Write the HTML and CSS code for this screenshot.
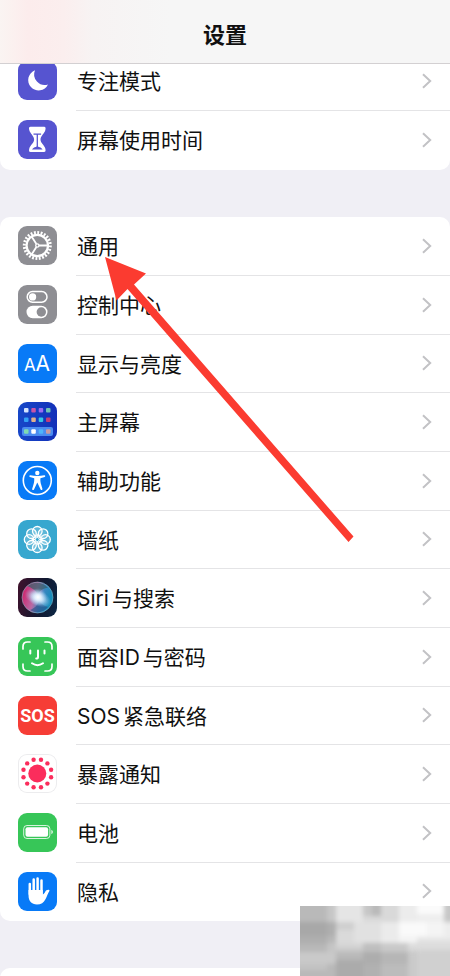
FILE: index.html
```html
<!DOCTYPE html>
<html lang="zh-CN">
<head>
<meta charset="utf-8">
<meta name="viewport" content="width=device-width, initial-scale=1">
<title>设置</title>
<link rel="stylesheet" href="styles.css">
</head>
<body>
<svg class="defs" aria-hidden="true">
  <symbol id="chevron" viewBox="0 0 10 16"><path d="M1 1.2 8.2 8 1 14.8" fill="none" stroke="#c2c2c5" stroke-width="2"/></symbol>
</svg>
<div class="screen">
  <header class="bar"><h1 class="title">设置</h1></header>
  <main class="groups">
    <ul class="group">
      <li class="row"><a class="link" href="#focus">
        <svg class="icon indigo" viewBox="0 0 39 39"><path fill="#fff" d="M17 9.3A10.4 10.4 0 1 0 30 23.5 10.6 10.6 0 0 1 17 9.3Z"/></svg>
        <span class="label">专注模式</span><svg class="chevron"><use href="#chevron"/></svg></a></li>
      <li class="row"><a class="link" href="#screen-time">
        <svg class="icon indigo" viewBox="0 0 39 39"><path fill="#fff" d="M12.5 6.8h13.6c1.6 0 1.800 1.500 1.200 3.400-.9 3.200-4.800 5.800-4.800 9.300s3.900 5.700 4.800 8.900c.6 2.200.3 3.600-1.300 3.600H12.600c-1.600 0-1.900-1.400-1.300-3.600.9-3.200 4.800-5.400 4.800-8.900s-3.900-6.100-4.800-9.300c-.6-1.900-.4-3.400 1.200-3.400Z"/><path d="M15.500 14.200h7.600M19.300 14.200v13" stroke="#5654d0" stroke-width="1.300" fill="none"/><path fill="#5654d0" d="M14 29.500c.8-1.600 3-2.300 5.300-3.200 2.300.9 4.500 1.600 5.300 3.200Z"/></svg>
        <span class="label">屏幕使用时间</span><svg class="chevron"><use href="#chevron"/></svg></a></li>
    </ul>
    <ul class="group">
      <li class="row"><a class="link" href="#general">
        <svg class="icon gray" viewBox="0 0 39 39"><g fill="none" stroke="#fff"><circle cx="19.3" cy="19.5" r="13" stroke-width="3" pathLength="48" stroke-dasharray="1.1 .9"/><circle cx="19.3" cy="19.5" r="10.7" stroke-width="2.2"/><circle cx="19.3" cy="19.5" r="1.600" stroke-width="1.3"/><path stroke-width="1.800" d="M21 19.500h9M18.400 18 13.600 10.500M18.400 21l-4.800 7.500"/></g></svg>
        <span class="label">通用</span><svg class="chevron"><use href="#chevron"/></svg></a></li>
      <li class="row"><a class="link" href="#control-center">
        <svg class="icon gray" viewBox="0 0 39 39"><rect x="9.2" y="6.6" width="19.8" height="10.6" rx="5.3" fill="none" stroke="#fff" stroke-width="1.5"/><circle cx="14.6" cy="11.900" r="3.6" fill="#fff"/><rect x="8.5" y="20.800" width="21" height="12.4" rx="6.2" fill="#fff"/><circle cx="23.3" cy="27" r="4.7" fill="#8e8e93"/></svg>
        <span class="label">控制中心</span><svg class="chevron"><use href="#chevron"/></svg></a></li>
      <li class="row"><a class="link" href="#display">
        <svg class="icon blue" viewBox="0 0 39 39"><text class="glyph" x="6" y="27" font-size="17">A</text><text class="glyph" x="17.500" y="27" font-size="21">A</text></svg>
        <span class="label">显示与亮度</span><svg class="chevron"><use href="#chevron"/></svg></a></li>
      <li class="row"><a class="link" href="#home-screen">
        <svg class="icon navy" viewBox="0 0 39 39"><rect x="4" y="25" width="31" height="9" rx="2" fill="#4a8cf0"/><g><rect x="6" y="6" width="4.5" height="4.5" rx="1" fill="#d5e4ff"/><rect x="13.3" y="6" width="4.5" height="4.5" rx="1" fill="#c855a8"/><rect x="20.7" y="6" width="4.5" height="4.5" rx="1" fill="#9a6bf0"/><rect x="28" y="6" width="4.5" height="4.5" rx="1" fill="#6fc3b5"/><rect x="6" y="15.5" width="4.5" height="4.5" rx="1" fill="#32a0f5"/><rect x="13.3" y="15.5" width="4.5" height="4.5" rx="1" fill="#e0b08c"/><rect x="20.7" y="15.5" width="4.5" height="4.5" rx="1" fill="#35c5e5"/><rect x="28" y="15.5" width="4.5" height="4.5" rx="1" fill="#c23d78"/><rect x="6" y="27.2" width="4.5" height="4.5" rx="1" fill="#7fdcb0"/><rect x="13.3" y="27.2" width="4.5" height="4.5" rx="1" fill="#fff"/><rect x="20.7" y="27.2" width="4.5" height="4.5" rx="1" fill="#4fb4fa"/><rect x="28" y="27.2" width="4.5" height="4.5" rx="1" fill="#c99aa0"/></g></svg>
        <span class="label">主屏幕</span><svg class="chevron"><use href="#chevron"/></svg></a></li>
      <li class="row"><a class="link" href="#accessibility">
        <svg class="icon blue" viewBox="0 0 39 39"><circle cx="19.3" cy="19.5" r="14" fill="none" stroke="#fff" stroke-width="1.6"/><circle cx="19.3" cy="12" r="2.2" fill="#fff"/><path fill="#fff" d="M12.3 14.300c2.300.5 4.600.8 7 .8s4.700-.3 7-.8c1-.2 1.400 1.400.4 1.700l-4.300 1.300c-.2 2.500.1 4.300.8 6.500l1.200 4c.4 1.200-1.300 1.800-1.800.6l-3.300-6.800-3.300 6.800c-.5 1.200-2.200.6-1.800-.6l1.200-4c.7-2.200 1-4 .8-6.500L11.900 16c-1-.3-.6-1.900.4-1.700Z"/></svg>
        <span class="label">辅助功能</span><svg class="chevron"><use href="#chevron"/></svg></a></li>
      <li class="row"><a class="link" href="#wallpaper">
        <svg class="icon cyan" viewBox="0 0 39 39"><g fill="#ffffff30" stroke="#fff" stroke-width="1.3"><circle cx="19.3" cy="11.3" r="4.8"/><circle cx="25.1" cy="13.7" r="4.8"/><circle cx="27.5" cy="19.5" r="4.8"/><circle cx="25.1" cy="25.3" r="4.8"/><circle cx="19.3" cy="27.7" r="4.8"/><circle cx="13.5" cy="25.3" r="4.8"/><circle cx="11.1" cy="19.5" r="4.8"/><circle cx="13.5" cy="13.7" r="4.8"/></g><g stroke="#fff" stroke-width="1"><path d="M19.3 14v11M13.800 19.500h11M15.400 15.600l7.800 7.800M23.200 15.600l-7.800 7.800"/></g><circle cx="19.3" cy="19.5" r="2" fill="#37a7cf" stroke="#fff"/></svg>
        <span class="label">墙纸</span><svg class="chevron"><use href="#chevron"/></svg></a></li>
      <li class="row"><a class="link" href="#siri">
        <svg class="icon siri" viewBox="0 0 39 39"><defs><radialGradient id="core"><stop offset="0" stop-color="#fff"/><stop offset=".3" stop-color="#e6f4ff" stop-opacity=".85"/><stop offset="1" stop-color="#9bc8f0" stop-opacity="0"/></radialGradient><linearGradient id="orb" x1="0" y1=".3" x2="1" y2=".6"><stop offset="0" stop-color="#d01f68"/><stop offset=".42" stop-color="#b86aa4"/><stop offset=".65" stop-color="#3a86c0"/><stop offset="1" stop-color="#0b8eb8"/></linearGradient></defs><circle cx="19.5" cy="19.5" r="15.5" fill="url(#orb)"/><path d="M9 8c7-5 16-4 21 2-5 0-8 2-10 7-2-5-6-7-11-9Z" fill="#345f68" opacity=".7"/><path d="M12 32c5-2 8-5 9-10 2 4 5 6 9 7-5 6-12 7-18 3Z" fill="#254c83" opacity=".6"/><circle cx="19.5" cy="19.5" r="15.5" fill="none" stroke="#86b2c5" stroke-opacity=".6"/><ellipse cx="20" cy="20" rx="14" ry="8" transform="rotate(25 20 20)" fill="url(#core)"/><circle cx="20" cy="19" r="9" fill="url(#core)"/></svg>
        <span class="label"><span class="latin">Siri</span>与搜索</span><svg class="chevron"><use href="#chevron"/></svg></a></li>
      <li class="row"><a class="link" href="#face-id">
        <svg class="icon green" viewBox="0 0 39 39"><g fill="none" stroke="#fff" stroke-width="1.7" stroke-linecap="round"><path d="M5 12V9.500Q5 5 9.500 5H12M27 5h2.500Q34 5 34 9.500V12M34 27v2.500Q34 34 29.500 34H27M12 34H9.500Q5 34 5 29.500V27"/><path d="M12.300 13.500v3M26.500 13.500v3M20 13.500v6.500q0 1.600-1.800 1.600M14 26.300q5.500 3.800 11 0" stroke-width="2"/></g></svg>
        <span class="label">面容<span class="latin">ID</span>与密码</span><svg class="chevron"><use href="#chevron"/></svg></a></li>
      <li class="row"><a class="link" href="#sos">
        <svg class="icon red" viewBox="0 0 39 39"><text class="sos" x="19.5" y="26" text-anchor="middle">SOS</text></svg>
        <span class="label"><span class="latin">SOS</span>紧急联络</span><svg class="chevron"><use href="#chevron"/></svg></a></li>
      <li class="row"><a class="link" href="#exposure">
        <svg class="icon white" viewBox="0 0 39 39"><g fill="#fb2d5c"><circle cx="19.3" cy="19.5" r="9"/><circle cx="33.1" cy="23.2" r="2.2"/><circle cx="29.4" cy="29.6" r="2.2"/><circle cx="23" cy="33.3" r="2.2"/><circle cx="15.6" cy="33.3" r="2.2"/><circle cx="9.2" cy="29.6" r="2.2"/><circle cx="5.5" cy="23.2" r="2.2"/><circle cx="5.5" cy="15.8" r="2.2"/><circle cx="9.2" cy="9.4" r="2.2"/><circle cx="15.6" cy="5.7" r="2.2"/><circle cx="23" cy="5.7" r="2.2"/><circle cx="29.4" cy="9.4" r="2.2"/><circle cx="33.1" cy="15.8" r="2.2"/></g></svg>
        <span class="label">暴露通知</span><svg class="chevron"><use href="#chevron"/></svg></a></li>
      <li class="row"><a class="link" href="#battery">
        <svg class="icon green" viewBox="0 0 39 39"><rect x="5.7" y="12.5" width="26.2" height="13" rx="3.3" fill="none" stroke="#fff" stroke-opacity=".8"/><rect x="7.5" y="14.3" width="22.6" height="9.4" rx="2" fill="#fff"/><path fill="#fff" fill-opacity=".8" d="M33.300 16.800q1.700.8 1.700 2.200t-1.700 2.200Z"/></svg>
        <span class="label">电池</span><svg class="chevron"><use href="#chevron"/></svg></a></li>
      <li class="row"><a class="link" href="#privacy">
        <svg class="icon blue" viewBox="0 0 39 39"><path fill="none" stroke="#fff" stroke-width="2.5" stroke-linecap="round" d="M11.800 12v10M15.700 7.500V21M19.600 6.500V21M23.500 8.500V22"/><path fill="#fff" d="M10.550 18h14.200v4.500c1.200-.6 2-1.600 2.600-3 .5-1.200 1.800-2 3.300-1.800 1 .1 1 .8.6 1.500-1.400 2.300-2.300 5.200-3.800 8-1.700 3.400-4.400 5.300-8.500 5.300-5.400 0-8.400-3.500-8.400-9Z"/></svg>
        <span class="label">隐私</span><svg class="chevron"><use href="#chevron"/></svg></a></li>
    </ul>
    <ul class="group"><li class="row"></li></ul>
  </main>

  <svg class="arrow" viewBox="0 0 249 286" aria-hidden="true"><path fill="#fb3b30" d="M0 0 41 16.500 29 27.500 248.500 279.500 243.500 285 22.500 32 11.500 43.500Z"/></svg>

  <svg class="mosaic" viewBox="0 0 150 70" aria-hidden="true">
    <rect width="150" height="70" fill="#d0d0d0"/>
    <g class="tiles">
    <path fill="#b9b9b9" d="M-9-9h36v25H-9zM72-9h9v22h-9z"/><path fill="#c7c7c7" d="M27-9h9v25h-9zM63-9h9v22h-9zM144-9h15v25h-15z"/>
    <path fill="#e5e5e5" d="M36-9h27v25H36z"/><path fill="#d9d9d9" d="M63 10h18v6H63zM81-9h18v25H81z"/><path fill="#ececec" d="M99-9h18v25H99z"/><path fill="#fbfbfb" d="M117-9h27v17h-27z"/><path fill="#eee" d="M117 8h27v8h-27z"/>
    <path fill="#a8a8a8" d="M-9 16h36v14H-9z"/><path fill="#afafaf" d="M27 16h9v14h-9zM-9 30h36v8H-9z"/><path fill="#b8b8b8" d="M27 30h9v7h-9zM-9 38h36v8H-9z"/>
    <path fill="#cfcfcf" d="M36 16h18v8H36z"/><path fill="#dadada" d="M36 24h18v13H36z"/><path fill="#e1e1e1" d="M54 16h27v21H54z"/><path fill="#ebebeb" d="M81 16h18v21H81z"/><path fill="#fafafa" d="M99 16h28v14H99z"/><path fill="#f4f4f4" d="M127 16h17v14h-17zM99 30h18v7H99z"/><path fill="#ededed" d="M117 30h42v3h-42zM144 16h15v14h-15z"/><path fill="#e2e2e2" d="M117 33h42v4h-42z"/>
    <path fill="#c5c5c5" d="M27 37h9v9h-9z"/><path fill="#d5d5d5" d="M36 37h27v5H36z"/><path fill="#bfbfbf" d="M63 37h18v9H63z"/><path fill="#c9c9c9" d="M36 42h27v4H36zM81 37h27v9H81z"/><path fill="#dcdcdc" d="M108 37h51v7h-51z"/><path fill="#d0d0d0" d="M117 44h42v35h-42z"/>
    <path fill="#c9c9c9" d="M-9 46h45v12H-9z"/><path fill="#b9b9b9" d="M36 46h27v8H36z"/><path fill="#adadad" d="M63 46h18v12H63z"/><path fill="#b6b6b6" d="M81 46h27v12H81z"/><path fill="#cacaca" d="M108 46h9v33h-9z"/>
    <path fill="#c3c3c3" d="M-9 58h36v6H-9z"/><path fill="#b9b9b9" d="M-9 64h45v15H-9zM27 58h9v6h-9z"/><path fill="#ababab" d="M36 54h27v25H36z"/><path fill="#b1b1b1" d="M63 58h18v21H63z"/><path fill="#bcbcbc" d="M81 58h27v21H81z"/>
    </g>
  </svg>
</div>
</body>
</html>
```
FILE: styles.css
```css
* { box-sizing: border-box; }

body {
  margin: 0;
  background: #f0eff5;
  color: #101010;
  font-family: Inter, "Noto Sans CJK SC", sans-serif;
}

.defs { display: none; }

.screen {
  position: relative;
  height: 100vh;
  overflow: hidden;
}

.bar {
  position: relative;
  z-index: 1;
  display: flex;
  justify-content: center;
  padding: 20px 16px 13px;
  border-bottom: 1px solid #d3d0d2;
  background: linear-gradient(90deg, #faf4f2 0, #fcecec 28px, #fbeeee 64px, #f7f3f3 92px, #f6f6f6 170px);
}

.title {
  margin: 0;
  font-size: 22px;
  line-height: 30px;
  font-weight: 700;
}

.groups {
  display: grid;
  gap: 47px;
  margin-top: -12px;
}

.group {
  display: grid;
  grid-auto-rows: 59px 59px 58px;
  margin: 0;
  padding: 0;
  list-style: none;
  border-radius: 10px;
  background: #fff;
}

.link {
  display: flex;
  align-items: center;
  height: 100%;
  padding: 0 18px 2px;
  color: inherit;
  text-decoration: none;
}

.row {
  background: linear-gradient(#e4e4e6, #e4e4e6) 76px 100% / 100% 1px no-repeat;
}

.row:last-child { background: none; }

.icon {
  flex: none;
  width: 39px;
  height: 39px;
  margin-right: 20px;
  border-radius: 9px;
}

.label {
  flex: 1;
  padding-top: 3px;
  font-size: 21px;
  line-height: 30px;
}

.latin { margin: 0 3px; }
.latin:first-child { margin-left: 0; }

.chevron {
  width: 10px;
  height: 16px;
}

.indigo { background: #5654d0; }
.gray { background: #8e8e93; }
.blue { background: #087af7; }
.navy { background: linear-gradient(90deg, #1747c8, #1230b8); }
.cyan { background: #37a7cf; }
.siri { background: linear-gradient(100deg, #40122c, #111830 60%, #0b2846); }
.green { background: #37c658; }
.red { background: #f63d36; }
.white { background: #fff; box-shadow: inset 0 0 0 1px #ececee; }

.glyph { fill: #fff; font-family: Inter, sans-serif; }

.sos {
  fill: #fff;
  font-family: "Liberation Sans Narrow", Roboto, sans-serif;
  font-size: 18px;
  font-weight: 700;
}

.arrow {
  position: absolute;
  z-index: 2;
  top: 257px;
  left: 105px;
  width: 249px;
  height: 286px;
  pointer-events: none;
}

.mosaic {
  position: absolute;
  z-index: 2;
  right: 0;
  bottom: 0;
  width: 150px;
  height: 70px;
  overflow: hidden;
}

.tiles { filter: blur(2px); }
```
